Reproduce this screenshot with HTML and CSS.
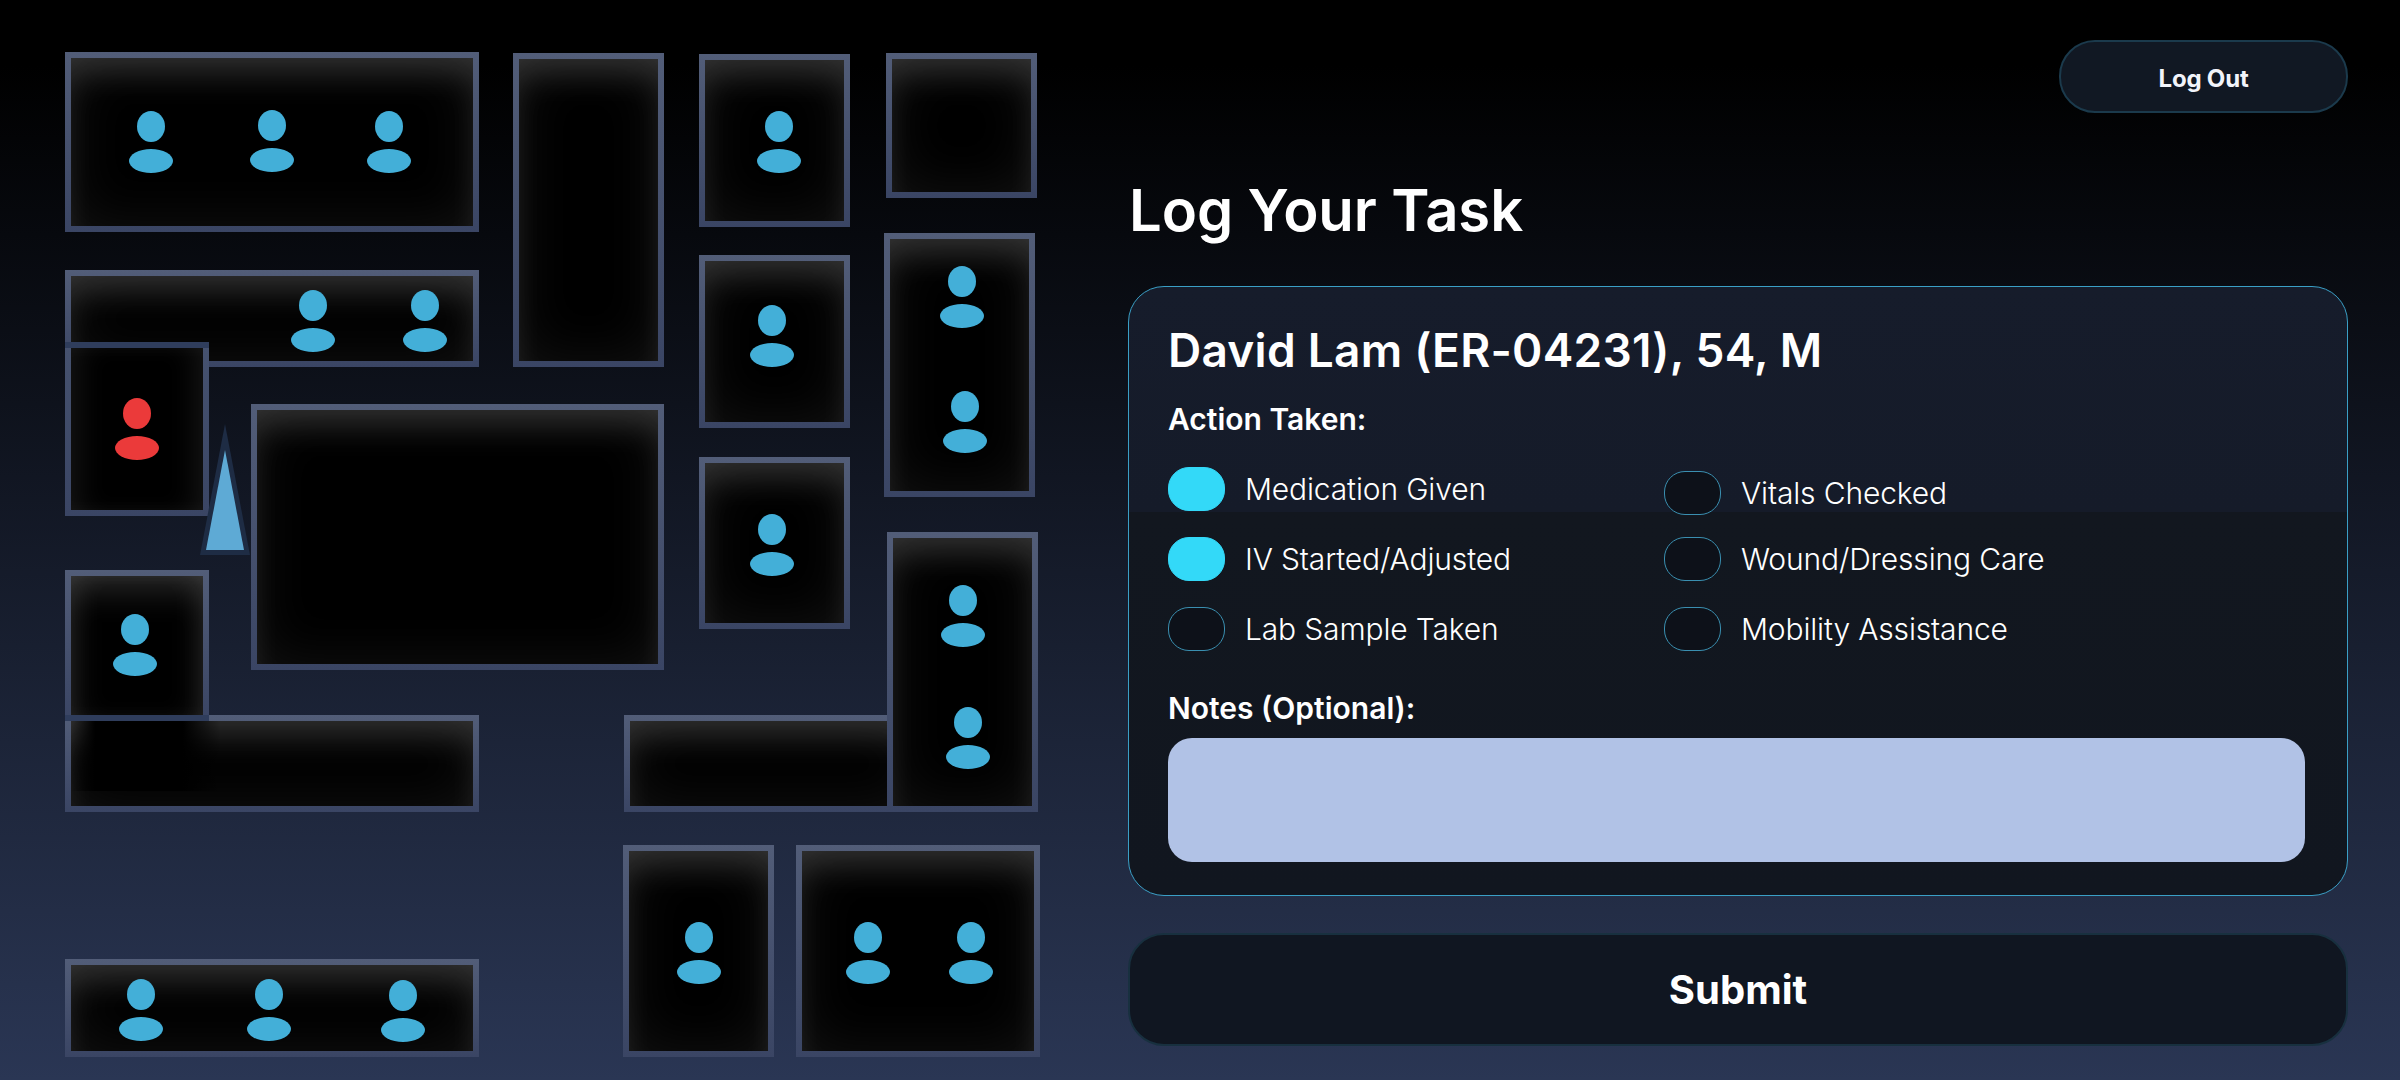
FILE: index.html
```html
<!DOCTYPE html>
<html lang="en">
<head>
<meta charset="utf-8">
<title>Log Your Task</title>
<link rel="stylesheet" href="styles.css">
</head>
<body>
<div class="page">
  <section class="map">
    <div class="room r-a"></div>
    <div class="room r-b"></div>
    <div class="room r-c"></div>
    <div class="room r-d"></div>
    <div class="room r-e"></div>
    <div class="room r-f"></div>
    <div class="room r-g"></div>
    <div class="room r-h"></div>
    <div class="room r-i"></div>
    <div class="room r-j"></div>
    <div class="room r-o"></div>
    <div class="room r-k"></div>
    <div class="room r-m"></div>
    <div class="room r-l"></div>
    <div class="room r-n"></div>
    <div class="room r-q"></div>
    <div class="room r-r"></div>

    <svg class="pointer" viewBox="0 0 50 131" aria-hidden="true">
      <polygon points="25,0 0,131 50,131" fill="#1e2c44"/>
      <polygon points="25,26 6,126 44,126" fill="#5eaad5"/>
    </svg>

    <div class="person p1"><i></i><b></b></div>
    <div class="person p2"><i></i><b></b></div>
    <div class="person p3"><i></i><b></b></div>
    <div class="person p4"><i></i><b></b></div>
    <div class="person p5"><i></i><b></b></div>
    <div class="person p6 alert"><i></i><b></b></div>
    <div class="person p7"><i></i><b></b></div>
    <div class="person p8"><i></i><b></b></div>
    <div class="person p9"><i></i><b></b></div>
    <div class="person p10"><i></i><b></b></div>
    <div class="person p11"><i></i><b></b></div>
    <div class="person p12"><i></i><b></b></div>
    <div class="person p13"><i></i><b></b></div>
    <div class="person p14"><i></i><b></b></div>
    <div class="person p15"><i></i><b></b></div>
    <div class="person p16"><i></i><b></b></div>
    <div class="person p17"><i></i><b></b></div>
    <div class="person p18"><i></i><b></b></div>
    <div class="person p19"><i></i><b></b></div>
    <div class="person p20"><i></i><b></b></div>
  </section>

  <main class="panel">
    <div class="topbar"><button class="logout" type="button">Log Out</button></div>
    <h1 class="title">Log Your Task</h1>
    <form class="card">
      <h2 class="patient">David Lam (ER-04231), 54, M</h2>
      <div class="field-label action-label">Action Taken:</div>
      <div class="checks">
        <label class="check"><input type="checkbox" checked><span>Medication Given</span></label>
        <label class="check check-low"><input type="checkbox"><span>Vitals Checked</span></label>
        <label class="check"><input type="checkbox" checked><span>IV Started/Adjusted</span></label>
        <label class="check"><input type="checkbox"><span>Wound/Dressing Care</span></label>
        <label class="check"><input type="checkbox"><span>Lab Sample Taken</span></label>
        <label class="check"><input type="checkbox"><span>Mobility Assistance</span></label>
      </div>
      <div class="field-label notes-label">Notes (Optional):</div>
      <textarea class="notes" aria-label="Notes"></textarea>
    </form>
    <button class="submit" type="button">Submit</button>
  </main>
</div>
</body>
</html>
```
FILE: styles.css
```css
* { box-sizing: border-box; }
html, body { margin: 0; height: 100%; }
body {
  background: linear-gradient(180deg, #000 6%, #2a3654 100%);
  color: #fff;
  font-family: Inter, "Noto Sans", sans-serif;
  overflow: hidden;
}
.page { display: flex; width: 2400px; height: 1080px; }

/* floor map: free canvas */
.map { position: relative; width: 1128px; height: 1080px; flex: none; }
.room {
  position: absolute;
  border: 6px solid transparent;
  background:
    linear-gradient(#000, #000) padding-box,
    linear-gradient(180deg, #525d78 0%, #3a4564 100%) border-box;
  box-shadow: inset 0 24px 34px -10px rgba(255, 255, 255, .16), inset 0 0 56px rgba(255, 255, 255, .075);
}
.r-a { left: 65px; top: 52px; width: 414px; height: 180px; }
.r-b { left: 513px; top: 53px; width: 151px; height: 314px; }
.r-c { left: 65px; top: 270px; width: 414px; height: 97px; }
.r-d {
  left: 65px; top: 342px; width: 144px; height: 174px;
  background:
    linear-gradient(#2f3d5c, #2f3d5c) top / 100% 6px no-repeat border-box,
    linear-gradient(#000, #000) padding-box,
    linear-gradient(180deg, #46526f 0%, #3a4564 100%) border-box;
  box-shadow: inset 18px 0 30px -12px rgba(255, 255, 255, .09), inset -18px 0 30px -12px rgba(255, 255, 255, .09);
}
.r-e { left: 251px; top: 404px; width: 413px; height: 266px; }
.r-f { left: 699px; top: 54px; width: 151px; height: 173px; }
.r-g { left: 886px; top: 53px; width: 151px; height: 145px; }
.r-h { left: 699px; top: 255px; width: 151px; height: 173px; }
.r-i { left: 884px; top: 233px; width: 151px; height: 264px; }
.r-j { left: 699px; top: 457px; width: 151px; height: 172px; }
.r-k { left: 887px; top: 532px; width: 151px; height: 280px; }
.r-l {
  left: 65px; top: 570px; width: 144px; height: 151px;
  background:
    linear-gradient(#2f3d5c, #2f3d5c) bottom / 100% 6px no-repeat border-box,
    linear-gradient(#000, #000) padding-box,
    linear-gradient(180deg, #525d78 0%, #3a4564 100%) border-box;
  box-shadow: inset 0 24px 34px -10px rgba(255, 255, 255, .16), inset 18px 0 30px -12px rgba(255, 255, 255, .09), inset -18px 0 30px -12px rgba(255, 255, 255, .09);
}
.r-m { left: 65px; top: 715px; width: 414px; height: 97px; }
.r-m::after {
  content: "";
  position: absolute;
  left: 0; top: 0;
  width: 150px; height: 70px;
  background: linear-gradient(90deg, transparent 0, #000 24px, #000 112px, transparent 100%);
}
.r-n { left: 65px; top: 959px; width: 414px; height: 98px; }
.r-o { left: 624px; top: 715px; width: 296px; height: 97px; }
.r-q { left: 623px; top: 845px; width: 151px; height: 212px; }
.r-r { left: 796px; top: 845px; width: 244px; height: 212px; }

.pointer { position: absolute; left: 200px; top: 424px; width: 50px; height: 131px; }

.person { position: absolute; width: 44px; display: flex; flex-direction: column; align-items: center; gap: 7px; }
.person i { display: block; width: 28px; height: 31px; border-radius: 50%; background: #43afd8; }
.person b { display: block; width: 44px; height: 24px; border-radius: 50%; background: #43afd8; }
.person.alert i, .person.alert b { background: #eb3a3a; }
.p1 { left: 129px; top: 111px; }
.p2 { left: 250px; top: 110px; }
.p3 { left: 367px; top: 111px; }
.p4 { left: 291px; top: 290px; }
.p5 { left: 403px; top: 290px; }
.p6 { left: 115px; top: 398px; }
.p7 { left: 757px; top: 111px; }
.p8 { left: 750px; top: 305px; }
.p9 { left: 940px; top: 266px; }
.p10 { left: 943px; top: 391px; }
.p11 { left: 750px; top: 514px; }
.p12 { left: 941px; top: 585px; }
.p13 { left: 946px; top: 707px; }
.p14 { left: 113px; top: 614px; }
.p15 { left: 119px; top: 979px; }
.p16 { left: 247px; top: 979px; }
.p17 { left: 381px; top: 980px; }
.p18 { left: 677px; top: 922px; }
.p19 { left: 846px; top: 922px; }
.p20 { left: 949px; top: 922px; }

/* right panel */
.panel { width: 1220px; flex: none; padding-top: 40px; display: flex; flex-direction: column; }
.topbar { display: flex; justify-content: flex-end; }
.logout {
  width: 289px; height: 73px;
  padding-top: 6px;
  border: 2px solid #1b3a4c;
  border-radius: 36px;
  background: #111823;
  color: #f2f4fa;
  font: 700 24px/1 Inter, sans-serif;
  letter-spacing: -.2px;
}
.title { margin: 61px 0 40px 1px; font-size: 58px; line-height: 72px; font-weight: 600; letter-spacing: -.1px; }
.card {
  height: 610px;
  padding: 35px 42px 32px 39px;
  border: 1px solid #3a9fc6;
  border-radius: 36px;
  background: linear-gradient(180deg, #161c2b 0, #151b29 225px, #12171f 225px, #11161f 100%);
}
.patient { margin: 0; font-size: 46px; line-height: 56px; font-weight: 600; letter-spacing: .25px; }
.field-label { font-size: 30px; line-height: 40px; font-weight: 600; }
.action-label { margin-top: 21px; }
.checks {
  margin-top: 28px;
  display: grid;
  grid-template-columns: 496px 1fr;
  row-gap: 26px;
}
.check { display: flex; align-items: center; gap: 20px; height: 44px; font-size: 30px; font-weight: 300; color: #fff; letter-spacing: -.15px; }
.check-low { margin-top: 4px; margin-bottom: -4px; }
.check input {
  appearance: none;
  margin: 0;
  width: 57px; height: 44px;
  border: 1px solid #3a8fb0;
  border-radius: 21px;
  background: #0d1119;
}
.check input:checked { background: #33d9f8; border-color: #33d9f8; }
.notes-label { margin-top: 37px; }
.notes {
  display: block;
  margin-top: 10px;
  width: 1137px; height: 124px;
  border: 0;
  border-radius: 24px;
  background: #b1c2e6;
  resize: none;
}
.submit {
  margin-top: 37px;
  width: 1220px; height: 113px;
  border: 2px solid #18303f;
  border-radius: 36px;
  background: #101621;
  color: #fff;
  font: 700 40px/1 Inter, sans-serif;
}
```
